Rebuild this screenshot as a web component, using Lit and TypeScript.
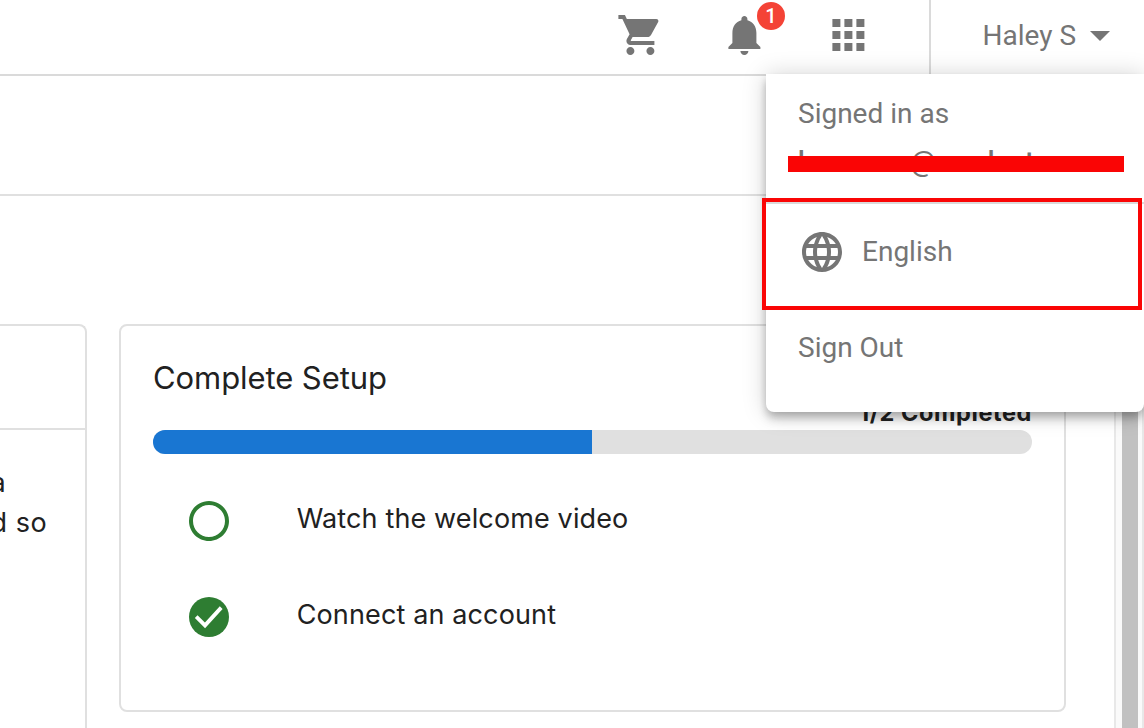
import { LitElement, html, css, svg } from "lit";
import { customElement } from "lit/decorators.js";

const icon = (path: unknown) =>
  html`<svg class="icon" viewBox="0 0 24 24" aria-hidden="true">${path}</svg>`;

const cart = svg`<path d="M7 18c-1.1 0-1.99.9-1.99 2S5.9 22 7 22s2-.9 2-2-.9-2-2-2zM1 2v2h2l3.6 7.59-1.35 2.45c-.16.28-.25.61-.25.96 0 1.1.9 2 2 2h12v-2H7.42c-.14 0-.25-.11-.25-.25l.03-.12.9-1.63h7.45c.75 0 1.41-.41 1.75-1.03l3.58-6.49c.08-.14.12-.31.12-.48 0-.55-.45-1-1-1H5.21l-.94-2H1zm16 16c-1.1 0-1.99.9-1.99 2s.89 2 1.99 2 2-.9 2-2-.9-2-2-2z"/>`;
const bell = svg`<path d="M12 22c1.1 0 2-.9 2-2h-4c0 1.1.89 2 2 2zm6-6v-5c0-3.07-1.64-5.64-4.5-6.32V4c0-.83-.67-1.5-1.5-1.5s-1.5.67-1.5 1.5v.68C7.63 5.36 6 7.92 6 11v5l-2 2v1h16v-1l-2-2z"/>`;
const apps = svg`<path d="M4 8h4V4H4v4zm6 12h4v-4h-4v4zm-6 0h4v-4H4v4zm0-6h4v-4H4v4zm6 0h4v-4h-4v4zm6-10v4h4V4h-4zm-6 4h4V4h-4v4zm6 6h4v-4h-4v4zm0 6h4v-4h-4v4z"/>`;
const caret = svg`<path d="M7 10l5 5 5-5z"/>`;
const globe = svg`<path d="M11.99 2C6.47 2 2 6.48 2 12s4.47 10 9.99 10C17.52 22 22 17.52 22 12S17.52 2 11.99 2zm6.93 6h-2.95c-.32-1.25-.78-2.45-1.38-3.56 1.84.63 3.37 1.91 4.33 3.56zM12 4.04c.83 1.2 1.48 2.53 1.91 3.96h-3.82c.43-1.43 1.08-2.76 1.91-3.96zM4.26 14C4.1 13.36 4 12.69 4 12s.1-1.36.26-2h3.38c-.08.66-.14 1.32-.14 2s.06 1.34.14 2H4.26zm.82 2h2.95c.32 1.25.78 2.45 1.38 3.56-1.84-.63-3.37-1.9-4.33-3.56zm2.95-8H5.08c.96-1.66 2.49-2.93 4.33-3.56C8.81 5.55 8.35 6.75 8.03 8zM12 19.96c-.83-1.2-1.48-2.53-1.91-3.96h3.82c-.43 1.43-1.08 2.76-1.91 3.96zM14.34 14H9.66c-.09-.66-.16-1.32-.16-2s.07-1.35.16-2h4.68c.09.65.16 1.32.16 2s-.07 1.34-.16 2zm.25 5.56c.6-1.11 1.06-2.31 1.38-3.56h2.95c-.96 1.65-2.49 2.93-4.33 3.56zM16.36 14c.08-.66.14-1.32.14-2s-.06-1.34-.14-2h3.38c.16.64.26 1.31.26 2s-.1 1.36-.26 2h-3.38z"/>`;
const circle = svg`<path d="M12 2C6.48 2 2 6.48 2 12s4.48 10 10 10 10-4.48 10-10S17.52 2 12 2zm0 18c-4.42 0-8-3.58-8-8s3.58-8 8-8 8 3.58 8 8-3.58 8-8 8z"/>`;
const circleCheck = svg`<circle cx="12" cy="12" r="10"/><path class="tick" d="M5.6 11.8l4.4 4.4 8.1-8.9"/>`;

@customElement("app-root")
export class AppRoot extends LitElement {
  static styles = css`
    :host {
      display: flex;
      flex-direction: column;
      position: relative;
      box-sizing: border-box;
      width: 1144px;
      height: 728px;
      overflow: hidden;
      background: #fff;
      color: #212121;
      font-family: Inter, sans-serif;
      font-size: 27px;
    }
    * { box-sizing: border-box; }
    .icon { display: block; width: 48px; height: 48px; fill: currentColor; flex: none; }
    header {
      display: flex;
      justify-content: flex-end;
      flex: none;
      height: 76px;
      border-bottom: 2px solid #dadada;
      color: #757575;
      font-family: Roboto, sans-serif;
      font-size: 28px;
    }
    .actions { display: flex; gap: 56px; padding: 11px 57px 0 0; }
    .actions path { transform: translateX(0.2px); }
    .bell { position: relative; }
    .badge {
      position: absolute;
      left: 37px;
      top: -9px;
      width: 28px;
      height: 28px;
      border-radius: 50%;
      background: #f44336;
      color: #fff;
      font-size: 20px;
      font-weight: 500;
      line-height: 28px;
      text-align: center;
    }
    .user {
      display: flex;
      width: 215px;
      padding: 11px 20px 0 51.5px;
      border-left: 2px solid #dadada;
      line-height: 49px;
      justify-content: space-between;
      white-space: nowrap;
    }
    .user .icon { margin-right: 2px; }
    .toolbar { flex: none; height: 120px; border-bottom: 2px solid #e0e0e0; }
    .body { flex: 1; min-height: 0; display: flex; }
    .cards { flex: 1; display: flex; align-items: flex-start; gap: 32px; padding-top: 128px; }
    .intro {
      width: 87px;
      height: 480px;
      border: solid #e0e0e0;
      border-width: 2px 2px 0 0;
      border-top-right-radius: 8px;
    }
    .intro-head { height: 104px; border-bottom: 2px solid #e0e0e0; }
    .intro-text {
      display: flex;
      flex-direction: column;
      margin: 33px 0 0 -9.5px;
      line-height: 40px;
      white-space: pre;
      letter-spacing: 0.5px;
    }
    .setup {
      width: 947px;
      height: 388px;
      padding: 32px;
      border: 2px solid #e0e0e0;
      border-radius: 8px;
    }
    .title { font-size: 31px; line-height: 40px; letter-spacing: -0.08px; }
    .count {
      font-size: 23.5px;
      font-weight: 700;
      line-height: 31px;
      height: 31px;
      margin-top: -1px;
      margin-bottom: 2px;
      text-align: right;
      letter-spacing: 0.6px;
    }
    .bar { height: 24px; border-radius: 12px; background: #e0e0e0; overflow: hidden; }
    .fill { height: 100%; margin-left: -0.5px; background: #1976d2; }
    .step { display: flex; align-items: center; height: 96px; padding-left: 31.7px; }
    .bar + .step { margin-top: 19px; }
    .step .icon { color: #2e7d32; }
    .step span { margin: -6px 0 0 64px; letter-spacing: 0.13px; }
    .tick { fill: none; stroke: #fff; stroke-width: 1.9; }
    .gutter {
      display: flex;
      width: 30px;
      padding-left: 6px;
      border: solid #e8e8e8;
      border-width: 0 2px;
      background: #fafafa;
    }
    .thumb { width: 16px; background: #c1c1c1; }
    .menu {
      position: absolute;
      left: 766px;
      top: 74px;
      width: 378px;
      height: 338px;
      border-radius: 0 0 8px 8px;
      background: #fff;
      color: #757575;
      font-family: Roboto, sans-serif;
      font-size: 28px;
      box-shadow: 0 4px 8px -2px rgba(0, 0, 0, 0.2), 0 8px 10px 0 rgba(0, 0, 0, 0.14),
        0 1px 24px 0 rgba(0, 0, 0, 0.18);
    }
    .who { height: 130px; padding: 15px 32px 0; line-height: 49px; border-bottom: 2px solid #dadada; }
    .mail { margin-top: -1px; font-weight: 500; letter-spacing: -0.2px; }
    .lang { display: flex; align-items: center; gap: 16px; height: 96px; padding-left: 32px; }
    .lang span { margin-top: -2px; }
    .out { height: 96px; padding-left: 32px; line-height: 96px; }
    .strike { position: absolute; left: 788px; top: 156px; width: 336px; height: 16px; background: #fa0505; }
    .frame { position: absolute; left: 762px; top: 198px; width: 380px; height: 112px; border: 4px solid #fa0505; }
  `;

  private steps = [
    { label: "Watch the welcome video", done: false },
    { label: "Connect an account", done: true },
  ];

  render() {
    const done = this.steps.filter((s) => s.done).length;
    return html`
      <header>
        <div class="actions">
          ${icon(cart)}
          <div class="bell">${icon(bell)}<span class="badge">1</span></div>
          ${icon(apps)}
        </div>
        <div class="user"><span>Haley S</span>${icon(caret)}</div>
      </header>
      <div class="toolbar"></div>
      <div class="body">
        <div class="cards">
          <section class="intro">
            <div class="intro-head"></div>
            <div class="intro-text"><span>a</span><span>d so</span></div>
          </section>
          <section class="setup">
            <div class="title">Complete Setup</div>
            <div class="count">${done}/${this.steps.length} Completed</div>
            <div class="bar"><div class="fill" style="width:${(done / this.steps.length) * 100}%"></div></div>
            ${this.steps.map(
              (s) => html`<div class="step">${icon(s.done ? circleCheck : circle)}<span>${s.label}</span></div>`
            )}
          </section>
        </div>
        <div class="gutter"><div class="thumb"></div></div>
      </div>
      <div class="menu">
        <div class="who">
          <div>Signed in as</div>
          <div class="mail">hxxxxxxx@mxxlnnt</div>
        </div>
        <div class="lang">${icon(globe)}<span>English</span></div>
        <div class="out">Sign Out</div>
      </div>
      <div class="strike"></div>
      <div class="frame"></div>
    `;
  }
}
